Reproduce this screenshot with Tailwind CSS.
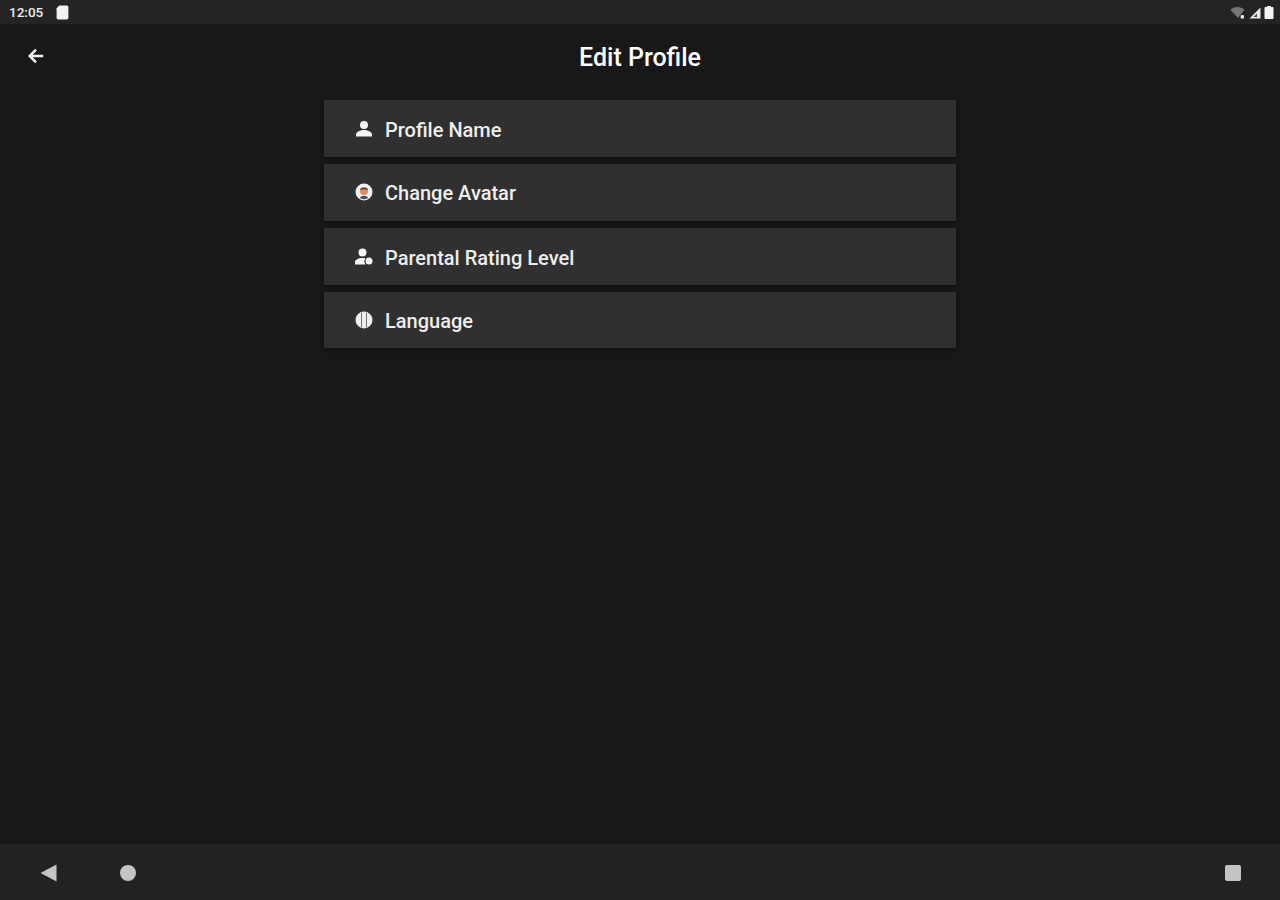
<!DOCTYPE html>
<html lang="en">

<head>
  <meta charset="UTF-8">
  <meta name="viewport" content="width=device-width, initial-scale=1.0">
  <title>Edit Profile</title>
  <script src="https://cdn.jsdelivr.net/npm/@tailwindcss/browser@4"></script>
</head>

<body class="bg-[#181818] text-white font-['Roboto',sans-serif] h-[900px] w-[1280px] overflow-hidden flex flex-col">

  <!-- Status bar -->
  <div class="h-[24px] bg-[#242424] flex items-center justify-between pl-[9px] pr-[6px]">
    <div class="flex items-center gap-[13px]">
      <span class="text-[13.500px] font-medium leading-none text-[#eeeeee] mt-[1px]">12:05</span>
      <svg class="w-[13px] h-[15px] mt-[1px]" viewBox="0 0 12 14"><path d="M3 0.5h7a1.5 1.5 0 0 1 1.5 1.5v10a1.5 1.5 0 0 1-1.5 1.5H2A1.5 1.5 0 0 1 .5 12V3z" fill="#f2f2f2"/></svg>
    </div>
    <div class="flex items-center gap-[3px] mt-[1px]">
      <svg class="w-[16px] h-[13px]" viewBox="0 0 14 12"><path d="M0 3.5C3.5 0 9.5 0 13 3.5L8.5 9 7 11z" fill="#777777"/><rect x="9.5" y="8.5" width="3" height="3" fill="#eeeeee"/></svg>
      <svg class="w-[12px] h-[12px]" viewBox="0 0 12 12"><path d="M11.5 .5V11.5H.5z" fill="#e8e8e8"/><path d="M8 6.5V10H4.5z" fill="#444444"/></svg>
      <svg class="w-[10px] h-[13px]" viewBox="0 0 10 13"><path d="M3 0h4v1h1.5A1 1 0 0 1 9.500 2v10a1 1 0 0 1-1 1h-7a1 1 0 0 1-1-1V2a1 1 0 0 1 1-1H3z" fill="#f5f5f5"/></svg>
    </div>
  </div>

  <!-- Header -->
  <div class="relative h-[66px] flex items-center justify-center">
    <svg class="absolute left-[27px] top-[23px] w-[18px] h-[18px]" viewBox="0 0 20 20" fill="none" stroke="#f2f2f2" stroke-width="2.800">
      <path d="M18 10H3M10 3l-7 7 7 7"/>
    </svg>
    <h1 class="text-[25px] font-medium leading-none mt-[1px] text-white">Edit Profile</h1>
  </div>

  <!-- Menu -->
  <div class="w-[632px] mx-auto mt-[10px] flex flex-col gap-[7px]">
    <div class="h-[57px] bg-[#303030] shadow-[0_2px_4px_rgba(0,0,0,0.4)] flex items-center pl-[31px] gap-[12px]">
      <svg class="w-[18px] h-[18px] shrink-0" viewBox="0 0 18 18" fill="#f5f5f5"><circle cx="9" cy="5" r="4"/><path d="M1 16.500v-2c0-3 5-4.500 8-4.500s8 1.500 8 4.500v2z"/></svg>
      <span class="text-[20px] font-medium leading-none text-[#eeeeee] mt-[2px]">Profile Name</span>
    </div>
    <div class="h-[57px] bg-[#303030] shadow-[0_2px_4px_rgba(0,0,0,0.4)] flex items-center pl-[31px] gap-[12px]">
      <svg class="w-[18px] h-[18px] shrink-0 mb-[1px]" viewBox="0 0 18 18"><circle cx="9" cy="9" r="8.500" fill="#f0f0f0"/><circle cx="9" cy="8" r="4" fill="#d98a5f"/><path d="M5 7c0-3 8-3 8 0-2-1-6-1-8 0z" fill="#5a3020"/><path d="M5 15c1-3 7-3 8 0-2 1.500-6 1.500-8 0z" fill="#3a4a70"/></svg>
      <span class="text-[20px] font-medium leading-none text-[#eeeeee]">Change Avatar</span>
    </div>
    <div class="h-[57px] bg-[#303030] shadow-[0_2px_4px_rgba(0,0,0,0.4)] flex items-center pl-[31px] gap-[12px]">
      <svg class="w-[18px] h-[18px] shrink-0" viewBox="0 0 18 18" fill="#f5f5f5"><circle cx="7.500" cy="4.500" r="4"/><path d="M0 16.500v-2.500c0-2.500 4-4 7.500-4 1 0 2 .1 3 .4-1 1.200-1.500 2.600-1 4.100.2.800.6 1.500 1.100 2z"/><circle cx="14" cy="13" r="3.500"/></svg>
      <span class="text-[20px] font-medium leading-none text-[#eeeeee] mt-[2px]">Parental Rating Level</span>
    </div>
    <div class="h-[56px] bg-[#303030] shadow-[0_2px_4px_rgba(0,0,0,0.4)] flex items-center pl-[31px] gap-[12px]">
      <svg class="w-[18px] h-[18px] shrink-0" viewBox="0 0 18 18"><circle cx="9" cy="9" r="8.500" fill="#eeeeee"/><path d="M6.500 1.500v15M11.500 1.500v15" stroke="#777777" stroke-width="1"/></svg>
      <span class="text-[20px] font-medium leading-none text-[#eeeeee] mt-[1px]">Language</span>
    </div>
  </div>

  <!-- Nav bar -->
  <div class="mt-auto h-[56px] bg-[#222222] flex items-center pl-[40px] pr-[39px] pt-[1px]">
    <svg class="w-[17px] h-[18px]" viewBox="0 0 17 18"><path d="M16.500 0.500V17.500L.5 9z" fill="#c4c4c4"/></svg>
    <div class="w-[16px] h-[16px] rounded-full bg-[#c4c4c4] ml-[63px]"></div>
    <div class="w-[16px] h-[16px] rounded-[2px] bg-[#c4c4c4] ml-auto"></div>
  </div>

</body>

</html>
